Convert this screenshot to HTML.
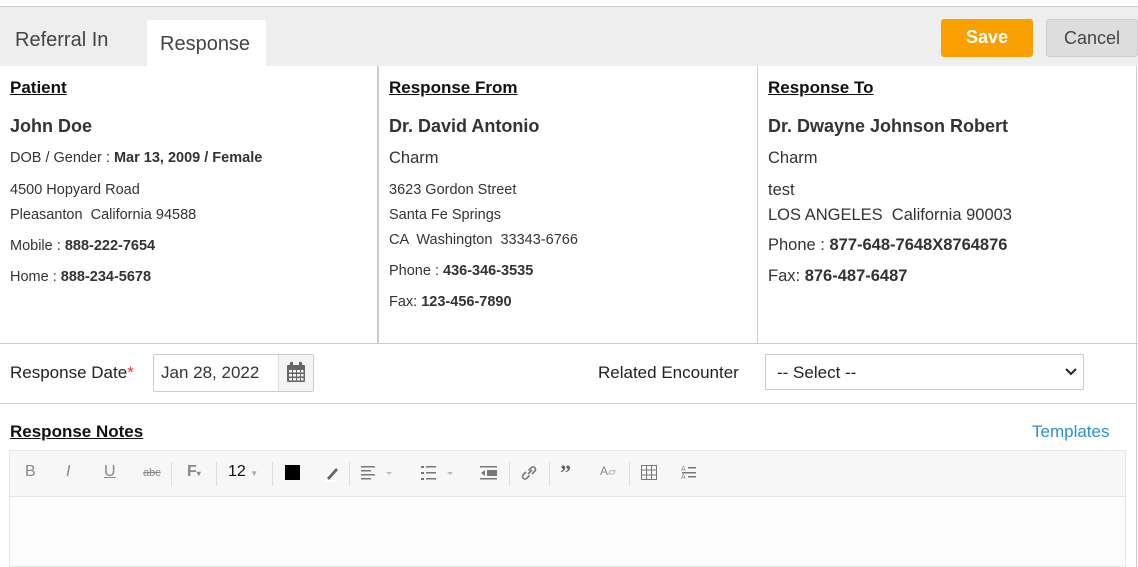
<!DOCTYPE html>
<html><head><style>
*{margin:0;padding:0;box-sizing:border-box}
body{width:1138px;height:567px;overflow:hidden;background:#fff;font-family:"Liberation Sans",sans-serif;color:#333;position:relative}
.a{position:absolute;white-space:nowrap}
.h{font-weight:bold;text-decoration:underline;color:#111;font-size:17px}
.n{font-weight:bold;font-size:18px;color:#333}
.s{font-size:14.5px;color:#333}
.s b{font-size:14.5px}
.m{font-size:16.5px}
.m b{font-size:16.5px}
.tb{position:absolute;top:463px;color:#888;font-size:16px}
.sep{position:absolute;top:462px;width:1px;height:24px;background:#ddd}
</style></head><body>
<div class="a" style="left:0;top:6px;width:1138px;height:1px;background:#ccc"></div>
<div class="a" style="left:0;top:7px;width:1138px;height:59px;background:#eee"></div>
<div class="a" style="left:15px;top:29px;font-size:20px;color:#444">Referral In</div>
<div class="a" style="left:147px;top:20px;width:119px;height:46px;background:#fff"></div>
<div class="a" style="left:160px;top:33px;font-size:20px;color:#444">Response</div>
<div class="a" style="left:941px;top:19px;width:92px;height:38px;background:#fa9f00;border-radius:3px;color:#fff;font-size:18px;font-weight:bold;text-align:center;line-height:37px">Save</div>
<div class="a" style="left:1046px;top:19px;width:92px;height:38px;background:#ddd;border:1px solid #ccc;border-radius:3px;color:#444;font-size:18px;text-align:center;line-height:36px">Cancel</div>

<div class="a" style="left:377px;top:66px;width:2px;height:277px;background:#ccc"></div>
<div class="a" style="left:757px;top:66px;width:1px;height:277px;background:#ccc"></div>
<div class="a" style="left:1136px;top:66px;width:1px;height:501px;background:#ccc"></div>

<div class="a h" style="left:10px;top:78px">Patient</div>
<div class="a n" style="left:10px;top:116px">John Doe</div>
<div class="a s" style="left:10px;top:150px">DOB / Gender : <b>Mar 13, 2009 / Female</b></div>
<div class="a s" style="left:10px;top:182px">4500 Hopyard Road</div>
<div class="a s" style="left:10px;top:207px">Pleasanton &nbsp;California 94588</div>
<div class="a s" style="left:10px;top:238px">Mobile : <b>888-222-7654</b></div>
<div class="a s" style="left:10px;top:269px">Home : <b>888-234-5678</b></div>

<div class="a h" style="left:389px;top:78px">Response From</div>
<div class="a n" style="left:389px;top:116px">Dr. David Antonio</div>
<div class="a m" style="left:389px;top:149px">Charm</div>
<div class="a s" style="left:389px;top:182px">3623 Gordon Street</div>
<div class="a s" style="left:389px;top:207px">Santa Fe Springs</div>
<div class="a s" style="left:389px;top:232px">CA &nbsp;Washington &nbsp;33343-6766</div>
<div class="a s" style="left:389px;top:263px">Phone : <b>436-346-3535</b></div>
<div class="a s" style="left:389px;top:294px">Fax: <b>123-456-7890</b></div>

<div class="a h" style="left:768px;top:78px">Response To</div>
<div class="a n" style="left:768px;top:116px">Dr. Dwayne Johnson Robert</div>
<div class="a m" style="left:768px;top:149px">Charm</div>
<div class="a m" style="left:768px;top:181px">test</div>
<div class="a m" style="left:768px;top:206px">LOS ANGELES &nbsp;California 90003</div>
<div class="a m" style="left:768px;top:236px">Phone : <b>877-648-7648X8764876</b></div>
<div class="a m" style="left:768px;top:267px">Fax: <b>876-487-6487</b></div>

<div class="a" style="left:0;top:343px;width:1138px;height:1px;background:#ccc"></div>
<div class="a" style="left:10px;top:363px;font-size:17px;color:#222">Response Date<span style="color:#e33">*</span></div>
<div class="a" style="left:153px;top:354px;width:161px;height:38px;border:1px solid #ccc;border-radius:2px"></div>
<div class="a" style="left:161px;top:363px;font-size:17px;color:#333">Jan 28, 2022</div>
<div class="a" style="left:278px;top:355px;width:35px;height:36px;background:#f4f4f4;border-left:1px solid #ddd"></div>
<svg class="a" style="left:286px;top:362px" width="20" height="21" viewBox="0 0 20 21"><rect x="1" y="3" width="18" height="17" rx="1" fill="#666"/><rect x="4" y="0" width="3" height="5" fill="#666"/><rect x="13" y="0" width="3" height="5" fill="#666"/><g fill="#f4f4f4"><rect x="3" y="8" width="3" height="2.5"/><rect x="7" y="8" width="3" height="2.5"/><rect x="11" y="8" width="3" height="2.5"/><rect x="15" y="8" width="2.5" height="2.5"/><rect x="3" y="12" width="3" height="2.5"/><rect x="7" y="12" width="3" height="2.5"/><rect x="11" y="12" width="3" height="2.5"/><rect x="15" y="12" width="2.5" height="2.5"/><rect x="3" y="16" width="3" height="2.5"/><rect x="7" y="16" width="3" height="2.5"/><rect x="11" y="16" width="3" height="2.5"/><rect x="15" y="16" width="2.5" height="2.5"/></g></svg>
<div class="a" style="left:598px;top:363px;font-size:17px;color:#222">Related Encounter</div>
<div class="a" style="left:765px;top:354px;width:319px;height:36px;border:1px solid #ccc"></div>
<div class="a" style="left:777px;top:363px;font-size:17px;color:#222">-- Select --</div>
<svg class="a" style="left:1065px;top:368px" width="12" height="8"><path d="M1 1l5 5 5-5" stroke="#222" stroke-width="2" fill="none"/></svg>
<div class="a" style="left:0;top:403px;width:1136px;height:1px;background:#ccc"></div>

<div class="a h" style="left:10px;top:422px">Response Notes</div>
<div class="a" style="left:1032px;top:422px;font-size:17px;color:#2a8fd6">Templates</div>

<div class="a" style="left:9px;top:450px;width:1117px;height:117px;border:1px solid #e6e6e6;background:#fdfdfd"></div>
<div class="a" style="left:10px;top:451px;width:1115px;height:46px;background:#f7f7f7;border-bottom:1px solid #e4e4e4"></div>
<div class="tb" style="left:25px">B</div>
<div class="tb" style="left:66px;font-style:italic">I</div>
<div class="tb" style="left:104px;text-decoration:underline">U</div>
<div class="tb" style="left:143px;font-size:11px;top:467px;text-decoration:line-through">abc</div>
<div class="sep" style="left:171px"></div>
<div class="tb" style="left:187px;font-weight:bold">F<span style="font-size:8px">▾</span></div>
<div class="sep" style="left:216px"></div>
<div class="tb" style="left:228px;color:#111">12 <span style="font-size:8px;color:#aaa">▼</span></div>
<div class="sep" style="left:272px"></div>
<div class="a" style="left:285px;top:465px;width:15px;height:15px;background:#000"></div>
<svg class="a" style="left:324px;top:464px" width="18" height="18"><path d="M3 14l9-10 2 2-9 10z" fill="#666"/><rect x="1" y="16" width="10" height="2" fill="#fff"/></svg>
<div class="sep" style="left:349px"></div>
<svg class="a" style="left:361px;top:465px" width="40" height="16"><g fill="#777"><rect y="1" width="14" height="1.5"/><rect y="5" width="10" height="1.5"/><rect y="9" width="14" height="1.5"/><rect y="13" width="10" height="1.5"/></g><path d="M25 7l3 3 3-3z" fill="#bbb"/></svg>
<svg class="a" style="left:421px;top:465px" width="40" height="16"><g fill="#777"><rect y="1" width="3" height="2"/><rect x="5" y="1" width="10" height="1.5"/><rect y="7" width="3" height="2"/><rect x="5" y="7" width="10" height="1.5"/><rect y="13" width="3" height="2"/><rect x="5" y="13" width="10" height="1.5"/></g><path d="M26 7l3 3 3-3z" fill="#bbb"/></svg>
<svg class="a" style="left:480px;top:465px" width="18" height="16"><g fill="#777"><rect y="1" width="17" height="1.5"/><rect x="7" y="5" width="10" height="6"/><rect y="13" width="17" height="1.5"/><path d="M5 5v6l-4-3z"/></g></svg>
<div class="sep" style="left:509px"></div>
<svg class="a" style="left:520px;top:464px" width="18" height="18"><path d="M8 10l4-4M6 8l-3 3a2.5 2.5 0 003.5 3.5l3-3M12 10l3-3a2.5 2.5 0 00-3.5-3.5l-3 3" stroke="#777" stroke-width="1.6" fill="none"/></svg>
<div class="sep" style="left:549px"></div>
<div class="tb" style="left:560px;font-weight:bold;font-size:22px;top:460px;color:#666;font-family:'Liberation Serif',serif">”</div>
<div class="tb" style="left:600px;font-size:12px;top:464px">A<span style="font-size:10px">⏥</span></div>
<div class="sep" style="left:629px"></div>
<svg class="a" style="left:641px;top:465px" width="16" height="15"><rect x="0.5" y="0.5" width="15" height="14" fill="none" stroke="#777"/><path d="M0 5h16M0 10h16M5.5 0v15M10.5 0v15" stroke="#777"/></svg>
<svg class="a" style="left:681px;top:464px" width="16" height="16"><text x="0" y="7" font-size="7" fill="#888" font-family="Liberation Sans">A</text><text x="0" y="15" font-size="7" fill="#888" font-family="Liberation Sans">A</text><rect x="7" y="3" width="8" height="1.5" fill="#777"/><rect x="1" y="8" width="14" height="1.5" fill="#777"/><rect x="7" y="12" width="8" height="1.5" fill="#777"/></svg>
</body></html>
